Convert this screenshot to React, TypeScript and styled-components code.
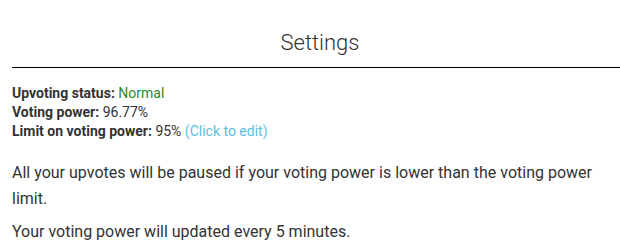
import styled, { createGlobalStyle } from 'styled-components';

const GlobalStyle = createGlobalStyle`
  html, body {
    margin: 0;
    padding: 0;
    background: #fff;
    overflow: hidden;
  }
  body {
    font-family: Roboto, 'Liberation Sans', sans-serif;
    color: #333;
  }
`;

const Page = styled.div`
  margin-left: 12px;
  width: 616px;
`;

const Header = styled.h2`
  margin: 0;
  padding: 28px 0 9px;
  font-size: 22px;
  line-height: 30px;
  font-weight: 300;
  text-align: center;
  color: #333;
  border-bottom: 1px solid #000;
`;

const Stats = styled.div`
  margin-top: 16px;
  font-size: 14px;
  line-height: 19px;
`;

const Label = styled.b`
  font-weight: 700;
`;

const Value = styled.span<{ $tone?: 'ok' | 'link' }>`
  color: ${p => (p.$tone === 'ok' ? '#2a8a2a' : p.$tone === 'link' ? '#5bc0de' : 'inherit')};
  cursor: ${p => (p.$tone === 'link' ? 'pointer' : 'auto')};
`;

const Notes = styled.div`
  margin-top: 19px;
  width: 580px;
`;

const Note = styled.p`
  margin: 0;
  font-size: 16px;
  line-height: 26px;
  text-align: justify;
  & + & {
    margin-top: 7px;
  }
`;

const App = () => {
  return (
    <Page>
      <GlobalStyle />
      <Header>Settings</Header>
      <Stats>
        <div>
          <Label>Upvoting status:</Label> <Value $tone='ok'>Normal</Value>
        </div>
        <div>
          <Label>Voting power:</Label> 96.77%
        </div>
        <div>
          <Label>Limit on voting power:</Label> 95% <Value $tone='link'>(Click to edit)</Value>
        </div>
      </Stats>
      <Notes>
        <Note>All your upvotes will be paused if your voting power is lower than the voting power limit.</Note>
        <Note>Your voting power will updated every 5 minutes.</Note>
      </Notes>
    </Page>
  );
};

export default App;
